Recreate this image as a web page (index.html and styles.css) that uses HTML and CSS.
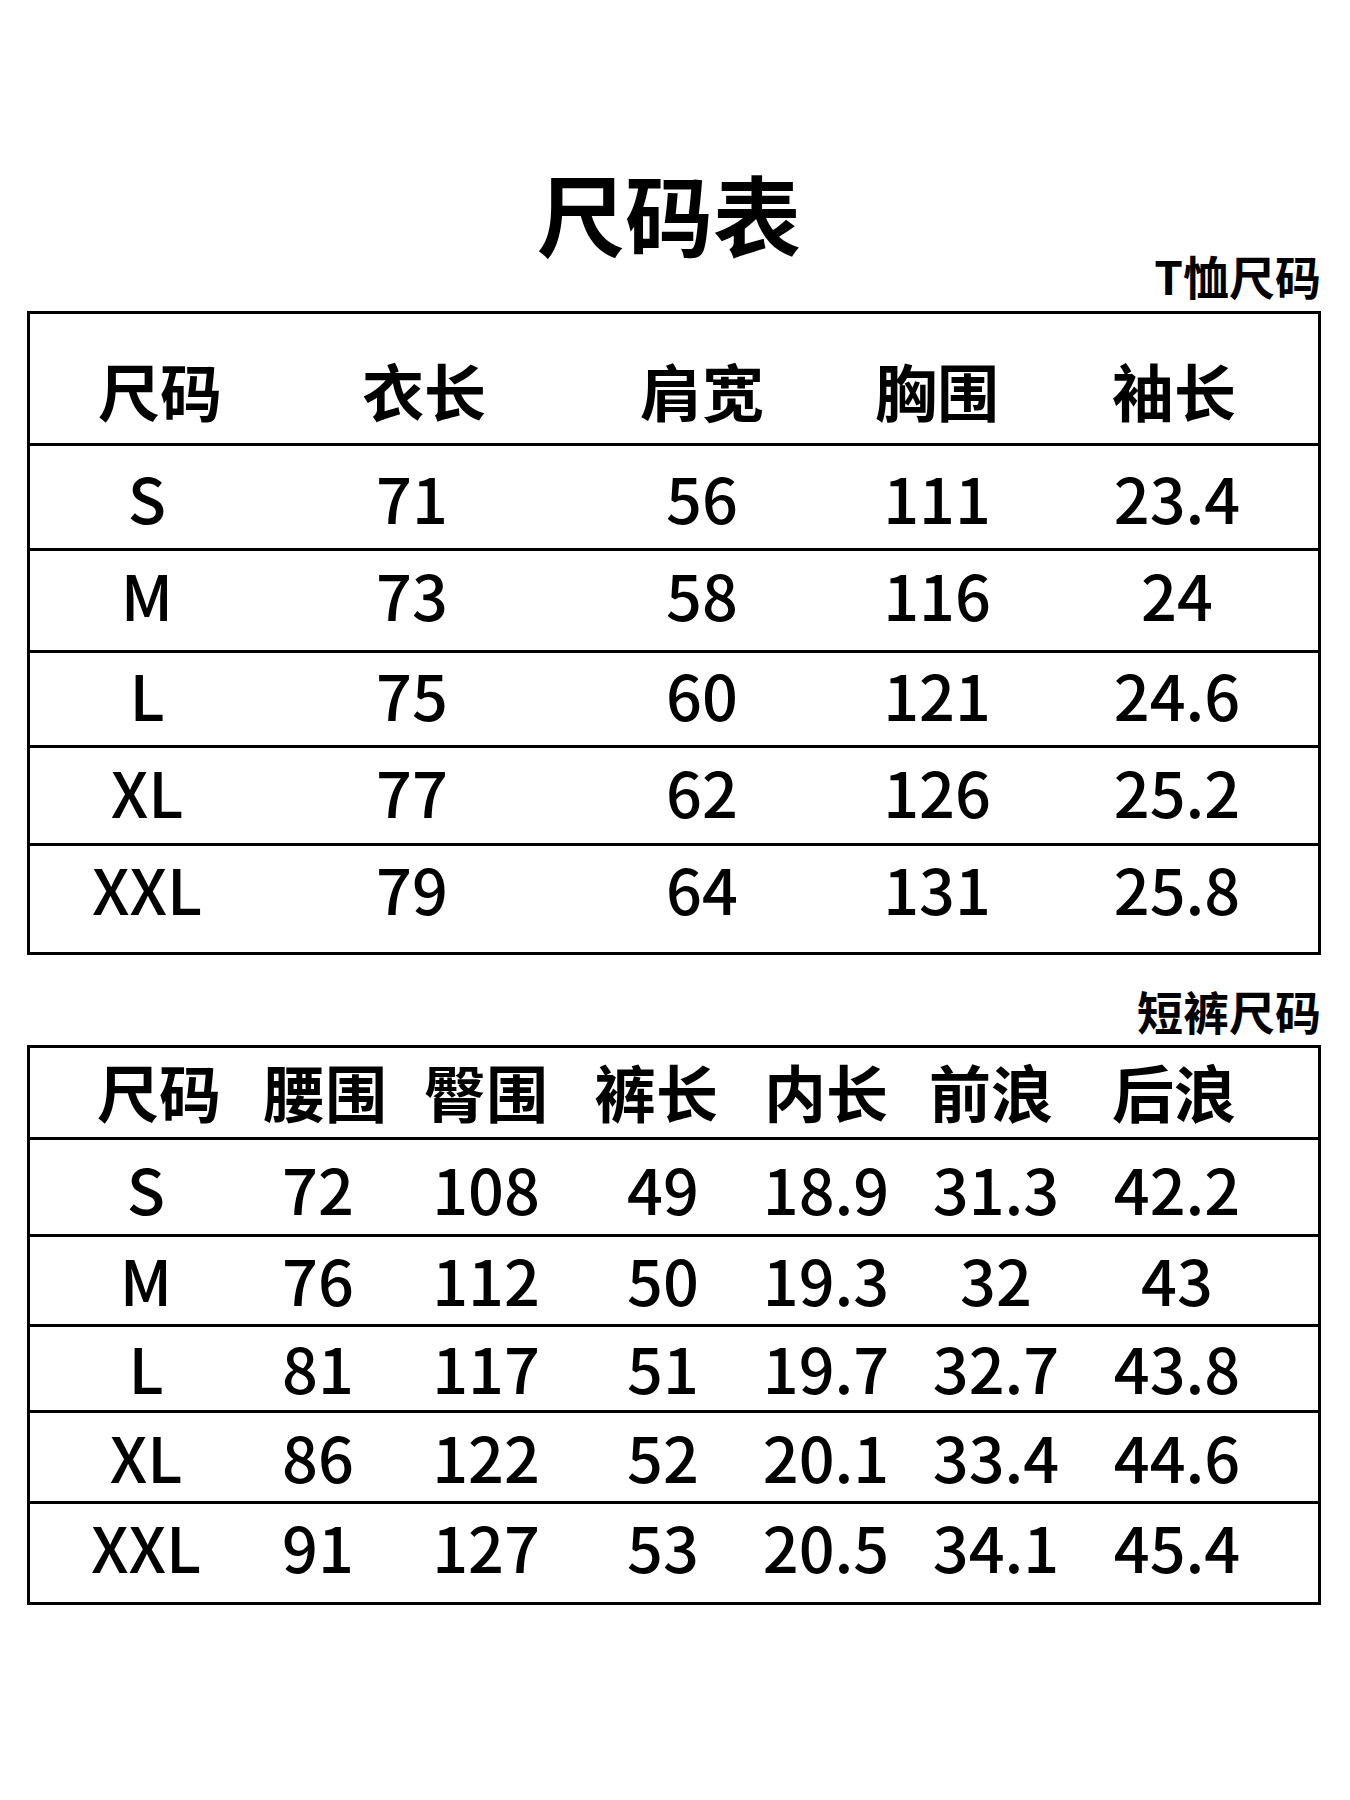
FILE: index.html
```html
<!DOCTYPE html>
<html lang="zh-CN">
<head>
<meta charset="utf-8">
<title>尺码表</title>
<link rel="stylesheet" href="styles.css">
</head>
<body>
<main class="page">
  <h1 class="title">尺码表</h1>
  <div class="caption caption-top">T恤尺码</div>
  <div class="table t1">
    <div class="row head"><div class="c first">尺码</div><div class="c">衣长</div><div class="c">肩宽</div><div class="c">胸围</div><div class="c">袖长</div></div>
    <div class="row"><div class="c">S</div><div class="c">71</div><div class="c">56</div><div class="c">111</div><div class="c">23.4</div></div>
    <div class="row"><div class="c">M</div><div class="c">73</div><div class="c">58</div><div class="c">116</div><div class="c">24</div></div>
    <div class="row"><div class="c">L</div><div class="c">75</div><div class="c">60</div><div class="c">121</div><div class="c">24.6</div></div>
    <div class="row"><div class="c">XL</div><div class="c">77</div><div class="c">62</div><div class="c">126</div><div class="c">25.2</div></div>
    <div class="row"><div class="c">XXL</div><div class="c">79</div><div class="c">64</div><div class="c">131</div><div class="c">25.8</div></div>
  </div>
  <div class="caption caption-mid">短裤尺码</div>
  <div class="table t2">
    <div class="row head"><div class="c first">尺码</div><div class="c">腰围</div><div class="c">臀围</div><div class="c">裤长</div><div class="c">内长</div><div class="c">前浪</div><div class="c">后浪</div></div>
    <div class="row"><div class="c">S</div><div class="c">72</div><div class="c">108</div><div class="c">49</div><div class="c">18.9</div><div class="c">31.3</div><div class="c">42.2</div></div>
    <div class="row"><div class="c">M</div><div class="c">76</div><div class="c">112</div><div class="c">50</div><div class="c">19.3</div><div class="c">32</div><div class="c">43</div></div>
    <div class="row"><div class="c">L</div><div class="c">81</div><div class="c">117</div><div class="c">51</div><div class="c">19.7</div><div class="c">32.7</div><div class="c">43.8</div></div>
    <div class="row"><div class="c">XL</div><div class="c">86</div><div class="c">122</div><div class="c">52</div><div class="c">20.1</div><div class="c">33.4</div><div class="c">44.6</div></div>
    <div class="row"><div class="c">XXL</div><div class="c">91</div><div class="c">127</div><div class="c">53</div><div class="c">20.5</div><div class="c">34.1</div><div class="c">45.4</div></div>
  </div>
</main>
</body>
</html>
```

FILE: styles.css
```css
* { box-sizing: border-box; }
html, body { margin: 0; padding: 0; background: #fff; }
body {
  font-family: "Noto Sans CJK SC", "Noto Sans", sans-serif;
  color: #000;
  width: 1350px;
  height: 1800px;
}
.page {
  padding-left: 27px;
  width: 1321px;
}
.title {
  margin: 168px 0 0 0;
  font-size: 88px;
  line-height: 88px;
  font-weight: 700;
  text-align: center;
  padding-right: 10px;
}
.caption {
  font-size: 46px;
  line-height: 46px;
  font-weight: 700;
  text-align: right;
}
.caption-top { margin-top: -4px; margin-bottom: 13px; }
.caption-mid { margin-top: 32px; margin-bottom: 12px; }

.table {
  border: 3px solid #000;
  width: 1294px;
}
.row {
  display: grid;
  align-items: center;
  border-top: 3px solid #000;
  font-size: 63px;
  line-height: 1;
  font-weight: 500;
}
.row:first-child { border-top: none; }
.c {
  text-align: center;
  white-space: nowrap;
}
.head { font-size: 62px; font-weight: 700; }
.head .first { padding-left: 26px; }

.t1 .row { grid-template-columns: 234px 296px 284px 186px 1fr; }
.t1 .head .c:nth-child(2) { padding-left: 24px; }
.t1 .row:not(.head) .c:nth-child(5) { padding-left: 6px; }
.t1 .row:nth-child(1) { height: 129px; padding-top: 23px; }
.t1 .row:nth-child(2) { height: 105px; padding-bottom: 2px; }
.t1 .row:nth-child(3) { height: 102px; padding-bottom: 14px; }
.t1 .row:nth-child(4) { height: 95px; padding-bottom: 12px; }
.t1 .row:nth-child(5) { height: 98px; padding-bottom: 10px; }
.t1 .row:nth-child(6) { height: 109px; padding-bottom: 24px; }

.t2 .row { grid-template-columns: 170px 170px 170px 170px 170px 170px 192px; padding-left: 31px; }
.t2 .head .first { padding-left: 26px; }
.t2 .head .c:nth-child(2) { padding-left: 18px; }
.t2 .head .c:nth-child(6) { padding-right: 10px; }
.t2 .head .c:nth-child(7) { padding-right: 6px; }
.t2 .row:not(.head) .c:nth-child(2) { padding-left: 4px; }
.t2 .row:not(.head) .c:nth-child(4) { padding-left: 14px; }
.t2 .row:nth-child(1) { height: 89px; padding-bottom: 3px; }
.t2 .row:nth-child(2) { height: 97px; }
.t2 .row:nth-child(3) { height: 90px; padding-bottom: 4px; }
.t2 .row:nth-child(4) { height: 86px; padding-bottom: 4px; }
.t2 .row:nth-child(5) { height: 91px; padding-bottom: 4px; }
.t2 .row:nth-child(6) { height: 101px; padding-bottom: 16px; }
```
